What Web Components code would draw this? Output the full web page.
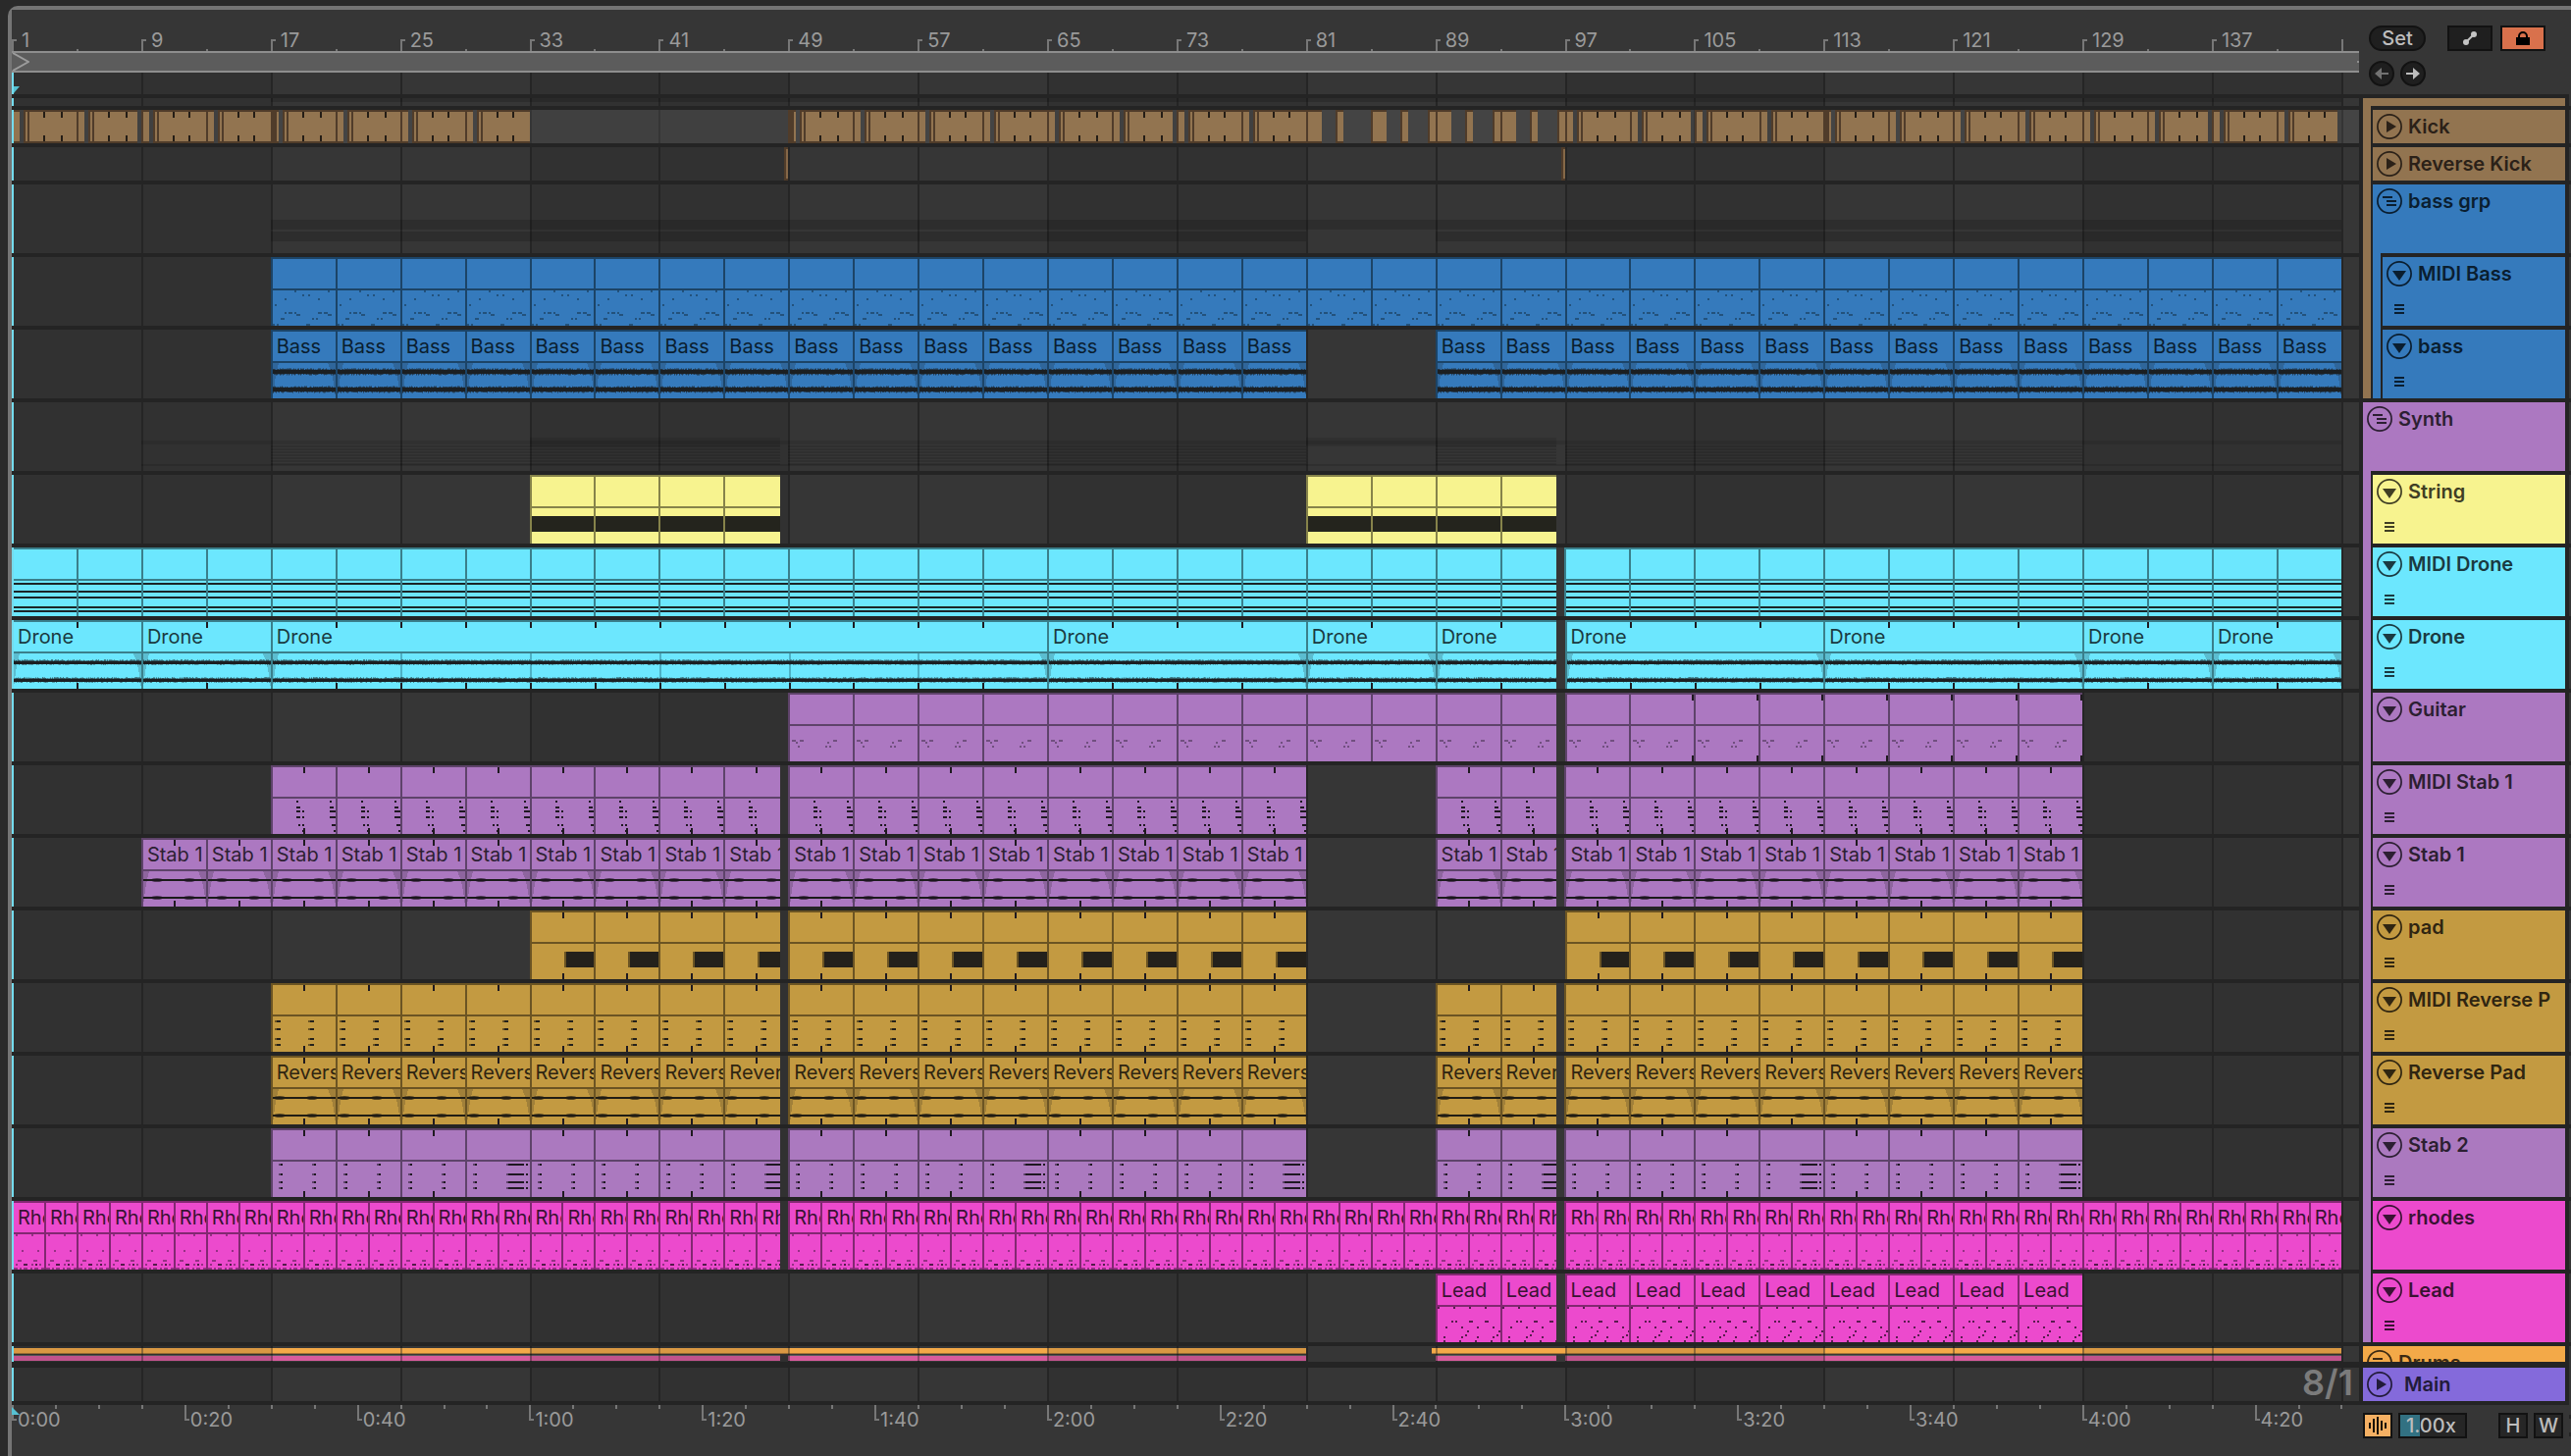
<!DOCTYPE html>
<html lang="en">
<head>
<meta charset="utf-8">
<title>Arrangement</title>
<style>
  :root {
    --gap: #242424;
    --panel: #363636;
    --cyan: #74dcee;
  }
  body { margin: 0; background: #2a2a2a; font: 400 20px/30px Inter, "Liberation Sans", sans-serif; color: #9a9a9a; }
  [tone=brown]   { --c: #927450; --edge: #503c2a; --ink: #2b2118; }
  [tone=blue]    { --c: #357abc; --edge: #1c4467; --ink: #0a1e30; --note: #23527c; }
  [tone=purple]  { --c: #ac78c1; --edge: #5e436a; --ink: #2c1f32; --note: #1f1822; }
  [tone=plum]    { --c: #ab79bf; --edge: #5e436a; --ink: #2c1f32; --note: #1f1822; }
  [tone=yellow]  { --c: #f7f38f; --edge: #86834a; --ink: #403e24; --note: #24241d; }
  [tone=cyan]    { --c: #6ce7fe; --edge: #3a7f8b; --ink: #1a3a41; --note: #1b2527; }
  [tone=ochre]   { --c: #c39a41; --edge: #6b5423; --ink: #2f2511; --note: #24211b; }
  [tone=magenta] { --c: #ec4acd; --edge: #822871; --ink: #3a1233; --note: #5a1b50; }
  [tone=orange]  { --c: #f3a948; --edge: #86602c; --ink: #3c2a13; }
  [tone=violet]  { --c: #846adb; --edge: #483a78; --ink: #221b3a; }
  [kind=guitar]  { --note: #714f80; }
</style>
</head>
<body>
<arrangement-view>
  <bar-ruler slot="ruler"></bar-ruler>
  <scrub-area slot="ruler"></scrub-area>

  <track-lane slot="lanes" size="22"></track-lane>
  <overview-lane slot="lanes" kind="kickgroup" size="8"></overview-lane>
  <overview-lane slot="lanes" kind="kick" tone="brown" size="34"></overview-lane>
  <overview-lane slot="lanes" kind="reversekick" tone="brown" size="34"></overview-lane>
  <overview-lane slot="lanes" kind="bassgroup" size="70"></overview-lane>
  <track-lane slot="lanes" tone="blue" kind="midibass" clips="16-144/4"></track-lane>
  <track-lane slot="lanes" tone="blue" kind="bass" name="Bass" clips="16-80/4 88-144/4"></track-lane>
  <overview-lane slot="lanes" kind="synthgroup" size="70"></overview-lane>
  <track-lane slot="lanes" tone="yellow" kind="string" clips="32-47.5/4 80-95.5/4"></track-lane>
  <track-lane slot="lanes" tone="cyan" kind="mididrone" clips="0-95.5/4 96-144/4"></track-lane>
  <track-lane slot="lanes" tone="cyan" kind="drone" name="Drone" clips="0-16/8 16-64/48 64-80/16 80-95.5/8 96-128/16 128-144/8"></track-lane>
  <track-lane slot="lanes" tone="purple" kind="guitar" clips="48-95.5/4 96-128/4"></track-lane>
  <track-lane slot="lanes" tone="purple" kind="midistab" clips="16-47.5/4 48-80/4 88-95.5/4 96-128/4"></track-lane>
  <track-lane slot="lanes" tone="purple" kind="stab" name="Stab 1" clips="8-47.5/4 48-80/4 88-95.5/4 96-128/4"></track-lane>
  <track-lane slot="lanes" tone="ochre" kind="pad" clips="32-47.5/4 48-80/4 96-128/4"></track-lane>
  <track-lane slot="lanes" tone="ochre" kind="midireverse" clips="16-47.5/4 48-80/4 88-95.5/4 96-128/4"></track-lane>
  <track-lane slot="lanes" tone="ochre" kind="reverse" name="Revers" clips="16-47.5/4 48-80/4 88-95.5/4 96-128/4"></track-lane>
  <track-lane slot="lanes" tone="plum" kind="stabtwo" clips="16-47.5/4 48-80/4 88-95.5/4 96-128/4"></track-lane>
  <track-lane slot="lanes" tone="magenta" kind="rhodes" name="Rho" clips="0-47.5/2 48-95.5/2 96-144/2"></track-lane>
  <track-lane slot="lanes" tone="magenta" kind="lead" name="Lead" clips="88-95.5/4 96-128/4"></track-lane>
  <overview-lane slot="lanes" kind="drums" size="16" class="last"></overview-lane>
  <track-lane slot="lanes" size="34" class="main">8/1</track-lane>

  <time-ruler slot="foot"></time-ruler>

  <set-controls slot="side"></set-controls>
  <track-group slot="side" tone="brown">
    <track-head slot="head" tone="brown" bare></track-head>
    <track-head tone="brown" icon="play" small>Kick</track-head>
    <track-head tone="brown" icon="play" small>Reverse Kick</track-head>
    <track-group tone="blue">
      <track-head slot="head" tone="blue" icon="group">bass grp</track-head>
      <track-head tone="blue" icon="open" menu>MIDI Bass</track-head>
      <track-head tone="blue" icon="open" menu>bass</track-head>
    </track-group>
  </track-group>
  <track-group slot="side" tone="purple">
    <track-head slot="head" tone="purple" icon="group">Synth</track-head>
    <track-head tone="yellow" icon="open" menu>String</track-head>
    <track-head tone="cyan" icon="open" menu>MIDI Drone</track-head>
    <track-head tone="cyan" icon="open" menu>Drone</track-head>
    <track-head tone="purple" icon="open">Guitar</track-head>
    <track-head tone="purple" icon="open" menu>MIDI Stab 1</track-head>
    <track-head tone="purple" icon="open" menu>Stab 1</track-head>
    <track-head tone="ochre" icon="open" menu>pad</track-head>
    <track-head tone="ochre" icon="open" menu>MIDI Reverse P</track-head>
    <track-head tone="ochre" icon="open" menu>Reverse Pad</track-head>
    <track-head tone="plum" icon="open" menu>Stab 2</track-head>
    <track-head tone="magenta" icon="open">rhodes</track-head>
    <track-head tone="magenta" icon="open" menu>Lead</track-head>
  </track-group>
  <track-head slot="side" tone="orange" icon="group" cut>Drums</track-head>
  <track-head slot="side" tone="violet" icon="play" small wide>Main</track-head>
  <view-controls slot="side"></view-controls>
</arrangement-view>

<script>
const BARS = 145.1;          // bars visible across the timeline
const PX = 16.485;           // drawing units per bar inside the lane artwork
const pct = bars => (bars / BARS * 100) + '%';
const box = (x, y, w, h, fill) => `<rect x="${x}" y="${y}" width="${w}" height="${h}"${fill ? ` fill="${fill}"` : ''}/>`;

function define(name, css, render) {
  customElements.define(name, class extends HTMLElement {
    constructor() {
      super();
      this.attachShadow({ mode: 'open' });
    }
    connectedCallback() {
      if (this.shadowRoot.childNodes.length) return;
      this.shadowRoot.innerHTML = `<style>*{box-sizing:border-box}${css}</style>${render(this)}`;
    }
  });
}

/* ---------- page frame ---------- */
define('arrangement-view', `
  :host { display: flex; margin: 6px 0 6px 8px; border: 4px solid #757575; border-right: 0; border-radius: 10px 0 0 10px; background: var(--panel); }
  .time { flex: 1; min-width: 0; display: flex; flex-direction: column; }
  .stack { display: grid; position: relative; overflow: hidden; }
  .stack > * { grid-area: 1 / 1; min-width: 0; }
  .stack::after { content: ""; position: absolute; inset: 0 auto 0 0; width: 2px; background: #8a8282; z-index: 1; }
  .lanes { display: flex; flex-direction: column; }
  .mark { position: absolute; width: 6px; height: 7px; left: 2px; top: 14px; z-index: 4; }
`, () => `
  <div class="time">
    <slot name="ruler"></slot>
    <div class="stack">
      <bar-grid></bar-grid>
      <div class="lanes"><slot name="lanes"></slot></div>
      <svg class="mark" viewBox="0 0 6 7"><path d="M0 0H6L0 7Z" fill="#56c1d3"/></svg>
    </div>
    <slot name="foot"></slot>
  </div>
  <side-panel><slot name="side"></slot></side-panel>
  <edge-strip></edge-strip>`);

define('side-panel', `
  :host { display: flex; flex: 0 0 214px; flex-direction: column; }
  ::slotted(track-group), ::slotted(track-head) { border: solid var(--gap); border-width: 4px 4px 0; }
  ::slotted(track-head[cut]) { border-bottom-width: 2px; }
  ::slotted(track-head[wide]) { border-bottom-width: 4px; }
`, () => `<slot></slot>`);

define('edge-strip', `
  :host { display: flex; flex: 0 0 2px; flex-direction: column; gap: 4px; margin: 90px 0 42px; background: var(--gap); }
  i { flex: none; background: var(--panel); }
`, () => [8, 34, 34, ...Array(17).fill(70), 14, 36].map(h => `<i style="height:${h}px"></i>`).join(''));

define('bar-grid', `
  :host { display: flex; overflow: hidden; }
  i { flex: none; border-left: 2px solid #252525; background: #313131; }
  i.lit { background: #363636; }
`, () => Array.from({ length: 19 }, (_, n) => `<i class="${n >> 1 & 1 ? 'lit' : ''}" style="width:${pct(8)}"></i>`).join(''));

/* ---------- rulers ---------- */
const rulerCss = `
  :host { display: flex; height: 42px; overflow: hidden; background: var(--panel); }
  div { flex: none; display: flex; }
  span { white-space: nowrap; color: #9a9a9a; }
  i { flex: none; width: 2px; background: #777; }
  i.flag { width: 5px; background: linear-gradient(#777, #777) 0 0 / 2px 100% no-repeat, linear-gradient(#777, #777) 0 var(--flag) / 5px 2px no-repeat; }
`;
define('bar-ruler', rulerCss + `
  div { align-items: flex-end; --flag: 0; }
  i { height: 2px; } i.flag, i.end { height: 12px; }
  span { padding-left: 5px; line-height: 22px; }
`, () => Array.from({ length: 37 }, (_, n) => {
  const bar = n * 4 + 1, major = n % 2 === 0;
  if (bar === 145) return `<div style="width:2px"><i class="end"></i></div>`;
  return `<div style="width:${pct(4)}"><i class="${major ? 'flag' : ''}"></i>${major ? `<span>${bar}</span>` : ''}</div>`;
}).join(''));

define('time-ruler', rulerCss + `
  :host { position: relative; }
  div { align-items: flex-start; --flag: 100%; }
  i { height: 4px; } i.flag { height: 16px; }
  span { padding-left: 1px; }
  .mark { position: absolute; left: 0; top: 2px; width: 8px; height: 8px; }
`, () => Array.from({ length: 55 }, (_, n) => {
  const s = n * 5, major = s % 20 === 0;
  const label = Math.floor(s / 60) + ':' + String(s % 60).padStart(2, '0');
  return `<div style="width:${pct(8 / 3)}"><i class="${major ? 'flag' : ''}"></i>${major ? `<span>${label}</span>` : ''}</div>`;
}).join('') + `<svg class="mark" viewBox="0 0 8 8"><path d="M0 0L8 8H0Z" fill="#56c1d3"/></svg>`);

define('scrub-area', `
  :host { display: flex; justify-content: space-between; align-items: center; height: 18px; background: #5c5c5c; border: solid #8e8e8e; border-width: 2px 0; }
  svg { width: 18px; height: 18px; }
  i { width: 2px; height: 2px; background: #8e8e8e; }
`, () => `<svg viewBox="0 0 18 18"><path d="M1 0L17 9L1 18" fill="none" stroke="#9c9c9c" stroke-width="2"/></svg><i></i>`);

/* ---------- clip artwork ---------- */
function notes(list, fill = 'var(--note)') {
  return list.map(([x, y, w = 2, h = 2]) => box(x, y, w, h, fill)).join('');
}
function ticks(x) { return box(x, 0, 2, 6, '#1f1a20') + box(x, 62, 2, 6, '#1f1a20'); }
function fades(w) {
  return `<path d="M0 32H6Q2 46 0 68Z M${w} 32H${w - 8}Q${w - 2} 44 ${w} 68Z" fill="#1a1a1a" fill-opacity=".2"/>`;
}
function wave(w, y, core, jitter, seed) {
  let s = seed, out = box(0, y - core / 2, w, core, '#1b2022'), d = '';
  for (let x = 0; x < w; x += 1) {
    s = (s * 1103515245 + 12345) % 2147483648;
    const a = (s >> 16) % 100 / 100 * jitter;
    s = (s * 1103515245 + 12345) % 2147483648;
    const b = (s >> 16) % 100 / 100 * jitter;
    d += `M${x} ${(y - core / 2 - a).toFixed(1)}h1v${(core + a + b).toFixed(1)}h-1z`;
  }
  return out + `<path d="${d}" fill="#1b2022" fill-opacity=".7" shape-rendering="auto"/>`;
}
function rows(ys, xs) { return ys.flatMap(y => xs.map(([x, w]) => [x, y, w])); }

const ART = {
  midibass: () => notes([[22,32],[56,32],[30,36],[36,36],[12,40],[46,40],[2,46],[12,54],[16,54,4],[22,54],[24,56,4],[46,54,4],[52,54,4],[56,56,4],[8,60,4],[40,60],[44,60],[0,66],[4,66],[34,66,4]]),
  bass: w => fades(w) + wave(w, 41, 4, 1.6, 7) + wave(w, 59, 4, 1.6, 31),
  string: w => box(0, 40, w, 16, 'var(--note)'),
  mididrone: w => [34, 42, 48, 58, 62].map(y => box(0, y, w, 2, 'var(--note)')).join(''),
  drone: (w, start, unit) => {
    let out = fades(w);
    if (unit === 48) for (let b = 8; b < unit; b += 8) out += box(Math.round(b * PX) - 2, 32, 2, 36, 'rgba(40,110,130,.45)');
    out += wave(w, 41, 3, 1.3, 11) + wave(w, 59, 3, 1.3, 17);
    for (let b = 4; b < unit; b += 4) out += ticks(Math.round(b * PX) - 2);
    return out;
  },
  guitar: (w, start) => notes([[2,46,4],[10,46,4],[6,48],[8,52],[44,46,4],[38,48],[36,52],[40,52]]) + (start >= 100 ? ticks(62) : ''),
  midistab: () => notes([[24,34],[24,40,4],[24,44,4],[30,44],[24,50,4],[30,50],[26,58],[30,58],[30,64],[58,34],[58,40,4],[58,44,6],[58,50,6],[60,58,4],[62,64]]) + ticks(31),
  stab: w => fades(w) + [41, 59].map(y => box(0, y - 1, w, 2, '#1b1b1b') +
      [12, 45].map(x => `<ellipse cx="${x + 2}" cy="${y}" rx="6" ry="2" fill="#1b141e" fill-opacity=".65" shape-rendering="auto"/>`).join('')).join('') + ticks(31),
  pad: () => box(33, 40, 2, 16, 'var(--edge)') + box(35, 40, 30, 16, 'var(--note)') + ticks(31),
  midireverse: () => notes(rows([36, 44, 54, 60], [[2, 2], [36, 2]]), 'var(--edge)') + notes(rows([36, 44, 54, 60], [[4, 4], [38, 4]])) + ticks(31),
  reverse: w => fades(w) + [41, 59].map(y => box(0, y - 1, w, 2, '#211d14') +
      [7, 40].map(x => `<ellipse cx="${x}" cy="${y}" rx="6" ry="2" fill="#211d14" fill-opacity=".7" shape-rendering="auto"/>`).join('')).join('') + ticks(31),
  stabtwo: (w, start) => {
    const ys = [34, 44, 52, 58], long = start % 16 === 12;
    return notes(rows(ys, [[6, 2], [40, 2]]), 'var(--edge)') + notes(rows(ys, long ? [[8, 2], [42, 16], [60, 2]] : [[8, 2], [42, 2]])) + (long ? '' : ticks(31));
  },
  rhodes: () => notes([[2,32],[18,32],[8,48],[24,48],[4,58,4],[20,58,4],[2,62],[18,62],[26,62],[0,66,4],[6,66,2],[10,66,4],[17,66,2],[21,66,4],[28,66,3]], '#963085') + notes([[10,62,4],[22,62]], '#551a4b'),
  lead: () => notes([[0,32],[16,32],[32,32],[48,32],[14,46],[18,46],[32,46,4],[48,46,4],[8,52],[24,52],[40,52],[56,52],[30,56],[62,56],[28,60],[60,60],[6,62],[24,62],[40,62],[56,62],[6,66],[22,66],[38,66],[54,66]])
};

define('track-clip', `
  :host { display: grid; grid-template-columns: 100%; flex: none; box-sizing: border-box; overflow: hidden; background: linear-gradient(var(--edge), var(--edge)) 0 30px / 100% 2px no-repeat var(--c); border: solid var(--edge); border-width: 2px 0 0 2px; color: var(--ink); }
  svg, span { grid-area: 1 / 1; min-width: 0; }
  svg { height: 68px; display: block; max-width: none; }
  span { padding-left: 4px; height: 30px; white-space: nowrap; overflow: hidden; }
`, el => {
  const start = +el.dataset.start, len = +el.dataset.len, unit = +el.dataset.unit;
  const w = Math.round(unit * PX - 2);
  const name = el.getAttribute('name');
  return `<svg style="width:${(unit * PX - 2) / (len * PX - 2) * 100}%" viewBox="0 0 ${w} 68" preserveAspectRatio="none" shape-rendering="crispEdges">${ART[el.dataset.kind](w, start, unit)}</svg>${name ? `<span>${name}</span>` : ''}`;
});

const laneCss = `
  :host { display: flex; position: relative; box-sizing: content-box; height: var(--h, 70px); overflow: hidden; border-bottom: 4px solid var(--gap); z-index: 2; }
  :host(.last) { border-bottom-width: 6px; }
  :host::after { content: ""; position: absolute; inset: 0 auto 0 0; width: 2px; background: var(--cyan); z-index: 3; }
`;
define('track-lane', laneCss + `
  :host(.main) { justify-content: flex-end; color: #7b7b7b; font-size: 36px; font-weight: 600; }
  slot { display: block; padding-right: 6px; }
`, el => {
  const size = el.getAttribute('size');
  let at = 0, out = size ? `<style>:host{--h:${size}px}</style>` : '';
  for (const run of (el.getAttribute('clips') || '').split(' ').filter(Boolean)) {
    const [, a, b, u] = run.match(/([\d.]+)-([\d.]+)\/(\d+)/).map(Number);
    for (let s = a; s < b; s += u) {
      const len = Math.min(u, b - s);
      const name = el.getAttribute('name');
      out += `<track-clip data-kind="${el.getAttribute('kind')}" data-start="${s}" data-len="${len}" data-unit="${u}"${name ? ` name="${name}"` : ''} style="width:${pct(len)};margin-left:${pct(s - at)}"></track-clip>`;
      at = s + len;
    }
  }
  return size ? out + '<slot></slot>' : out;
});

/* ---------- lanes drawn as one strip ---------- */
const X = bar => Math.round(bar * PX);
function kickBlock(bar, parts, dark, marks) {
  const o = X(bar);
  return parts.map(([a, b]) => box(o + a, 0, b - a, 34, '#503c2a') + box(o + a, 2, b - a, 30, '#927450')).join('') +
    dark.map(([a, w]) => box(o + a, 0, w, 34, '#503c2a')).join('') +
    marks.map(a => box(o + a, 2, 2, 6, '#241d16') + box(o + a, 26, 2, 6, '#241d16')).join('');
}
function kickRegular(bar, end = 264) {
  const open = bar % 32 === 0;
  return kickBlock(bar,
    [[0, 8], [12, 74], [78, open ? 128 : 140], [132, 140], [144, 206], [210, end]],
    [[0, bar === 0 ? 2 : open ? 2 : 6], [12, 2], [16, 2], [66, 2], [78, 2], [82, 2], [132, 2], [144, 2], [148, 2], [198, 2], [210, 2], [214, 2]],
    [32, 50, 98, 116, 164, 180, 230, 246]);
}
const STRIP = {
  kickgroup: () => box(X(16), 0, X(128), 4, 'rgba(0,0,0,.16)'),
  kick: () => box(0, 0, 2400, 34, 'rgba(255,255,255,.075)') +
    kickRegular(0) + kickRegular(16) + kickRegular(48) + kickRegular(64) +
    kickBlock(80, [[0,16],[30,38],[66,82],[96,104],[124,148],[162,170],[190,214],[228,236],[256,264]],
      [[0,2],[30,2],[66,2],[96,2],[124,2],[132,2],[162,2],[190,2],[198,2],[228,2],[256,2]], []) +
    kickRegular(96) + kickRegular(112) + kickRegular(128, 260),
  reversekick: () => [48, 96].map(b => box(X(b) - 4, 0, 4, 34, '#503c2a') + box(X(b) - 2, 2, 2, 30, '#856848')).join(''),
  bassgroup: () => box(X(16), 36, X(128), 10, 'rgba(0,0,0,.16)') + box(X(16), 48, X(64), 10, 'rgba(0,0,0,.16)') + box(X(88), 48, X(56), 10, 'rgba(0,0,0,.16)'),
  synthgroup: () => {
    let out = box(X(8), 39, X(136), 4, 'rgba(0,0,0,.1)') + box(X(8), 63, X(136), 2, 'rgba(0,0,0,.12)');
    for (const [a, b] of [[16, 47.5], [48, 80], [88, 95.5], [96, 128]])
      for (let y = 44; y < 63; y += 3) out += box(X(a), y, X(b) - X(a), 2, 'rgba(0,0,0,.12)');
    for (const [a, b] of [[32, 47.5], [80, 95.5]]) out += box(X(a), 36, X(b) - X(a), 9, 'rgba(0,0,0,.1)');
    return out;
  },
  drums: () => {
    let out = '';
    for (const [a, b] of [[0, 80], [87.8, 144]]) out += box(X(a), 2, X(b) - X(a), 6, '#f3a948') + box(X(a), 7, X(b) - X(a), 1, '#a67535');
    for (const [a, b] of [[0, 47.5], [48, 80], [88, 95.5], [96, 144]]) out += box(X(a), 9, X(b) - X(a), 1, '#5c5c5c') + box(X(a), 10, X(b) - X(a), 5, '#d85b9d');
    for (let b = 0; b < 144; b += 32) out += box(X(b), 0, X(16), 16, 'rgba(35,35,35,.12)');
    for (let b = 8; b < 144; b += 8) out += box(X(b), 0, 2, 16, 'rgba(36,36,36,.4)');
    return out;
  }
};
define('overview-lane', laneCss + `
  svg { flex: none; display: block; height: 100%; width: 100%; }
`, el => `<style>:host{--h:${el.getAttribute('size')}px}</style><svg viewBox="0 0 ${Math.round(BARS * PX)} ${el.getAttribute('size')}" preserveAspectRatio="none" shape-rendering="crispEdges">${STRIP[el.getAttribute('kind')]()}</svg>`);

/* ---------- track headers ---------- */
define('track-group', `
  :host { display: block; background: var(--gap); }
  div { display: flex; flex-direction: column; gap: 4px; border-left: 8px solid var(--c); padding: 4px 0 0 2px; }
`, () => `<slot name="head"></slot><div><slot></slot></div>`);

const GLYPH = {
  play: '<path d="M10 7L20 13L10 19Z"/>',
  open: '<path d="M6 10H20L13 20Z"/>',
  group: '<path d="M6 8h10v2H6zM10 12h10v2H10zM10 16h10v2H10z"/>'
};
define('track-head', `
  :host { display: flex; height: 70px; box-sizing: content-box; overflow: hidden; background: var(--c); background-clip: padding-box; color: var(--ink); font-weight: 600; white-space: nowrap; }
  :host([small]) { height: 34px; }
  :host([bare]) { height: 8px; }
  :host([cut]) { height: 16px; }
  .tools { flex: none; display: flex; flex-direction: column; align-items: center; gap: 18px; padding: 4px 6px 0 4px; }
  :host([wide]) .tools { padding-right: 12px; }
  button { border: 0; padding: 0; background: none; width: 26px; height: 26px; color: inherit; display: block; }
  button.menu { width: 10px; height: 10px; }
  svg { display: block; width: 100%; height: 100%; fill: currentColor; }
  .name { line-height: 26px; padding-top: 4px; }
`, el => el.hasAttribute('bare') ? '' : `
  <div class="tools">
    <button aria-label="Fold track"><svg viewBox="0 0 26 26"><circle cx="13" cy="13" r="12.1" fill="none" stroke="currentColor" stroke-width="1.7"/>${GLYPH[el.getAttribute('icon')]}</svg></button>
    ${el.hasAttribute('menu') ? '<button class="menu" aria-label="Take lanes"><svg viewBox="0 0 10 10"><path d="M0 0h10v2H0zM0 4h10v2H0zM0 8h10v2H0z"/></svg></button>' : ''}
  </div>
  <span class="name"><slot></slot></span>`);

/* ---------- controls ---------- */
const buttonCss = `
  button, input { font: 500 20px/22px Inter, "Liberation Sans", sans-serif; color: #bdbdbd; background: #1f1f1f; border: 2px solid #121212; height: 26px; padding: 0; flex: none; }
  svg { display: block; margin: auto; }
`;
define('set-controls', buttonCss + `
  :host { display: flex; flex-direction: column; gap: 10px; height: 86px; padding: 16px 0 0 10px; box-sizing: border-box; }
  div { display: flex; gap: 6px; }
  .set { width: 58px; border-radius: 13px; margin-right: 16px; }
  .box { width: 46px; margin-right: 2px; }
  .lock { background: #d9714c; color: #000; }
  .nav { width: 26px; border-radius: 13px; }
  .off { color: #727272; }
`, () => `
  <div>
    <button class="set">Set</button>
    <button class="box" aria-label="Automation"><svg width="42" height="22" viewBox="0 0 42 22"><path d="M17 15L25 7" stroke="#c4c4c4" stroke-width="2"/><circle cx="17" cy="15" r="3" fill="#c4c4c4"/><circle cx="25" cy="7" r="3" fill="#c4c4c4"/></svg></button>
    <button class="box lock" aria-label="Lock envelopes"><svg width="42" height="22" viewBox="0 0 42 22"><path d="M14 10h14v8H14z"/><path d="M17 10V9a4 4 0 0 1 8 0v1" fill="none" stroke="#000" stroke-width="2"/></svg></button>
  </div>
  <div>
    <button class="nav off" aria-label="Previous locator"><svg width="22" height="22" viewBox="0 0 22 22" fill="currentColor"><path d="M4 11L11 5V10H18V12H11V17Z"/></svg></button>
    <button class="nav" aria-label="Next locator"><svg width="22" height="22" viewBox="0 0 22 22" fill="currentColor"><path d="M18 11L11 5V10H4V12H11V17Z"/></svg></button>
  </div>`);

define('view-controls', buttonCss + `
  :host { display: flex; gap: 6px; padding: 8px 6px 0 4px; }
  .wave { width: 30px; background: #f5b063; }
  label { display: flex; margin-right: auto; }
  input { width: 70px; padding-left: 6px; background: linear-gradient(#327182, #327182) 0 0 / 20px 100% no-repeat #262626; border-radius: 0; }
  .key { width: 30px; background: #262626; }
`, () => `
  <button class="wave" aria-label="Optimize height"><svg width="26" height="22" viewBox="0 0 26 22"><path d="M4 8h2v6H4zM8 4h2v14H8zM12 2h2v18h-2zM16 6h2v10h-2zM20 8h2v6h-2z" fill="#1a1208"/></svg></button>
  <label><input type="text" value="1.00x" aria-label="Waveform zoom"></label>
  <button class="key">H</button>
  <button class="key">W</button>`);
</script>
</body>
</html>
